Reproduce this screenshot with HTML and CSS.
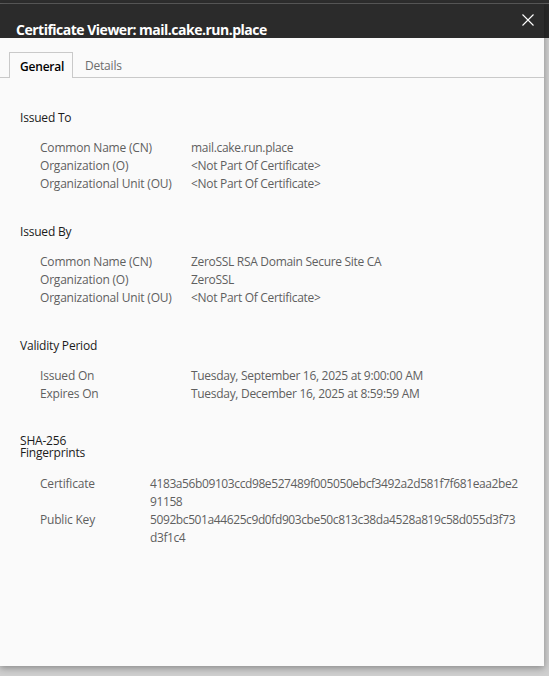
FILE: index.html
```html
<!DOCTYPE html>
<html>
<head>
<meta charset="utf-8">
<link rel="stylesheet" href="styles.css">
</head>
<body>
<div class="topline"></div>
<div class="dialog">
  <div class="titlebar">
    <div class="title">Certificate Viewer: mail.cake.run.place</div>
    <svg class="close" width="12" height="12" viewBox="0 0 12 12"><path d="M0.5 0.5 L11.5 11.5 M11.5 0.5 L0.5 11.5" stroke="#ffffff" stroke-width="1.1" fill="none"/></svg>
  </div>
  <div class="content">
    <div class="tabs">
      <div class="tab active">General</div>
      <div class="tab">Details</div>
    </div>

    <section class="section">
      <div class="heading">Issued To</div>
      <div class="rows">
        <div class="label">Common Name (CN)</div><div class="value">mail.cake.run.place</div>
        <div class="label">Organization (O)</div><div class="value">&lt;Not Part Of Certificate&gt;</div>
        <div class="label">Organizational Unit (OU)</div><div class="value">&lt;Not Part Of Certificate&gt;</div>
      </div>
    </section>

    <section class="section">
      <div class="heading">Issued By</div>
      <div class="rows">
        <div class="label">Common Name (CN)</div><div class="value">ZeroSSL RSA Domain Secure Site CA</div>
        <div class="label">Organization (O)</div><div class="value">ZeroSSL</div>
        <div class="label">Organizational Unit (OU)</div><div class="value">&lt;Not Part Of Certificate&gt;</div>
      </div>
    </section>

    <section class="section">
      <div class="heading">Validity Period</div>
      <div class="rows">
        <div class="label">Issued On</div><div class="value">Tuesday, September 16, 2025 at 9:00:00 AM</div>
        <div class="label">Expires On</div><div class="value">Tuesday, December 16, 2025 at 8:59:59 AM</div>
      </div>
    </section>

    <section class="section fingerprints">
      <div class="heading">SHA-256 Fingerprints</div>
      <div class="rows">
        <div class="label">Certificate</div><div class="value hash">4183a56b09103ccd98e527489f005050ebcf3492a2d581f7f681eaa2be2<br>91158</div>
        <div class="label">Public Key</div><div class="value hash">5092bc501a44625c9d0fd903cbe50c813c38da4528a819c58d055d3f73<br>d3f1c4</div>
      </div>
    </section>
  </div>
</div>
</body>
</html>
```

FILE: styles.css
```css
html, body {
  margin: 0;
  padding: 0;
}
body {
  width: 549px;
  height: 676px;
  overflow: hidden;
  background: linear-gradient(#292929 0, #292929 38px, #cfcfcf 38px);
  font-family: "Segoe UI", "Open Sans", "Noto Sans", sans-serif;
}
.topline {
  height: 3px;
  background: #2e2e2e;
  border-bottom: 1px solid #5e5e5e;
}
.dialog {
  width: 544px;
  height: 662px;
  display: flex;
  flex-direction: column;
  box-shadow: 0 2px 7px rgba(0, 0, 0, 0.35);
}
.titlebar {
  height: 34px;
  flex: none;
  background: #2b2b2b;
  display: flex;
  justify-content: space-between;
  align-items: flex-start;
  overflow: hidden;
}
.title {
  margin: 17px 0 0 16px;
  line-height: 18px;
  font-size: 14px;
  font-weight: 700;
  color: #ffffff;
  letter-spacing: -0.5px;
  white-space: nowrap;
}
.close {
  margin: 10px 10px 0 0;
  flex: none;
}
.content {
  flex: 1;
  background: #fafafa;
  font-size: 12px;
  letter-spacing: -0.2px;
}
.tabs {
  display: flex;
  padding: 14px 0 0 9px;
  border-bottom: 1px solid #c9c9c9;
  height: 25px;
}
.tab {
  height: 25px;
  line-height: 28px;
  padding: 0 12px;
  color: #6d6d6d;
  font-size: 12px;
}
.tab.active {
  box-sizing: border-box;
  height: 26px;
  width: 64px;
  padding: 0 0 0 10px;
  border: 1px solid #c9c9c9;
  border-bottom: none;
  background: #fafafa;
  color: #000;
  font-weight: 600;
  margin-bottom: -1px;
}
.section {
  margin-top: 30px;
  padding-left: 20px;
}
.section:first-of-type {
  margin-top: 31px;
}
.heading {
  line-height: 18px;
  color: #1b1b1b;
}
.rows {
  display: grid;
  grid-template-columns: 151px 1fr;
  margin-top: 12px;
  padding-left: 20px;
  line-height: 18px;
  color: #5f5f5f;
}
.value {
  letter-spacing: -0.3px;
}
.fingerprints {
  margin-top: 32px;
}
.fingerprints .heading {
  width: 80px;
  line-height: 12px;
}
.fingerprints .rows {
  grid-template-columns: 110px 1fr;
  margin-top: 16px;
}
.value.hash {
  letter-spacing: -0.4px;
}
```
